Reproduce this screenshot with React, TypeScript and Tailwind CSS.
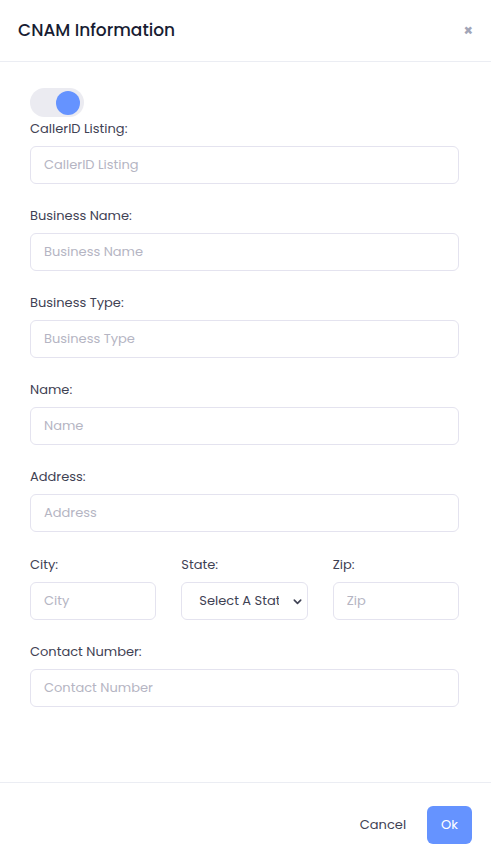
import React from 'react'

const font = { fontFamily: 'Poppins, Inter, "Open Sans", sans-serif' }

function Field({ label, placeholder }: { label: string; placeholder: string }) {
  return (
    <div className="flex flex-col">
      <label className="text-[13px] leading-[20px] text-[#3f4254]">{label}</label>
      <div className="mt-[7px] flex h-[38px] items-center rounded-[6px] border border-[#e4e3ef] bg-white px-[13px] text-[13px] text-[#b5b5c3]">
        {placeholder}
      </div>
    </div>
  )
}

export default function App() {
  return (
    <div className="flex min-h-[863px] w-[491px] flex-col bg-white" style={font}>
      <div className="flex h-[62px] items-center justify-between border-b border-[#ebedf3] pl-[18px] pr-[18px]">
        <h3 className="text-[17px] font-medium text-[#181c32]">CNAM Information</h3>
        <span className="text-[15px] font-bold leading-none text-[#a1a5b7]">×</span>
      </div>

      <div className="flex flex-1 flex-col pl-[30px] pr-[32px] pt-[26px]">
        <div className="flex h-[29px] w-[54px] items-center justify-end rounded-full bg-[#ebebf1] pr-[4px]">
          <div className="h-[24px] w-[24px] rounded-full bg-[#6593ff]" />
        </div>
        <div className="mt-[2px] flex flex-col gap-[22px]">
          <Field label="CallerID Listing:" placeholder="CallerID Listing" />
          <Field label="Business Name:" placeholder="Business Name" />
          <Field label="Business Type:" placeholder="Business Type" />
          <Field label="Name:" placeholder="Name" />
          <Field label="Address:" placeholder="Address" />
          <div className="mt-[1px] grid grid-cols-3 gap-[25px]">
            <Field label="City:" placeholder="City" />
            <div className="flex flex-col">
              <label className="text-[13px] leading-[20px] text-[#3f4254]">State:</label>
              <div className="mt-[7px] flex h-[38px] items-center rounded-[6px] border border-[#e4e3ef] bg-white pl-[17px] pr-[4px] text-[13px] text-[#3f4254]">
                <span className="w-[80px] overflow-hidden whitespace-nowrap">Select A State</span>
                <svg className="ml-auto" width="11" height="11" viewBox="0 0 24 24" fill="none" stroke="#3f4254" strokeWidth="3.5" strokeLinecap="round" strokeLinejoin="round">
                  <path d="M5 9l7 7 7-7" />
                </svg>
              </div>
            </div>
            <Field label="Zip:" placeholder="Zip" />
          </div>
          <Field label="Contact Number:" placeholder="Contact Number" />
        </div>
      </div>

      <div className="mt-auto flex h-[81px] items-start justify-end gap-[21px] border-t border-[#ebedf3] pr-[19px] pt-[23px]">
        <button className="mt-[9px] text-[13px] text-[#3f4254]">Cancel</button>
        <button className="h-[38px] rounded-[6px] bg-[#6593ff] px-[14px] text-[13px] text-white">Ok</button>
      </div>
    </div>
  )
}
